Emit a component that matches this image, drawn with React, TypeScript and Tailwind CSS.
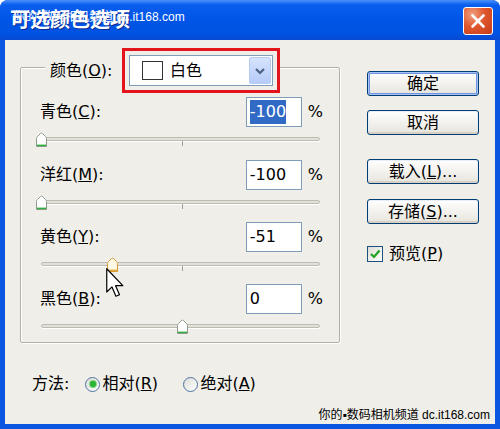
import React from 'react';

const font = { fontFamily: '"DejaVu Sans", "Noto Sans CJK SC", sans-serif' };
const markFont = { fontFamily: '"Liberation Sans", "Noto Sans CJK SC", sans-serif' };

function Thumb({ hover }: { hover?: boolean }) {
  return (
    <svg width="13" height="16" viewBox="0 0 13 16">
      <path
        d="M1.5 6.5 Q1.5 5.5 2.5 4.5 L5.5 1.5 Q6.5 0.8 7.5 1.5 L10.5 4.5 Q11.5 5.5 11.5 6.5 L11.5 14.5 L1.5 14.5 Z"
        fill={hover ? '#fff8e4' : '#ffffff'}
        stroke={hover ? '#d39a35' : '#8c9a8c'}
      />
      <path d="M2 12.6 L11 12.6 L11 14 L2 14 Z" fill={hover ? '#e8a93c' : '#2faf3c'} />
    </svg>
  );
}

function Slider({ thumb, hover, h }: { thumb: string; hover?: boolean; h: string }) {
  return (
    <div className={`relative ${h}`}>
      <div className="absolute left-[20px] top-[10px] h-[4px] w-[279px] rounded-full border border-[#bdbbb2] bg-[#e2e0d8] shadow-[0_1px_0_#ffffff]" />
      <div className="absolute left-[161px] top-[14px] h-[5px] w-px bg-[#a19f97]" />
      <div className={`absolute top-[5px] ${thumb}`}>
        <Thumb hover={hover} />
      </div>
    </div>
  );
}

function Row({ name, key1, value, selected }: { name: string; key1: string; value: string; selected?: boolean }) {
  return (
    <div className="flex h-[30px] items-center pl-[19px] pr-[16px]">
      <span>
        {name}(<span className="underline">{key1}</span>):
      </span>
      <div className="ml-auto flex h-[30px] w-[56px] items-center border border-[#7f9db9] bg-white pl-[3px]">
        {selected ? <span className="bg-[#316ac5] text-white">{value}</span> : <span>{value}</span>}
      </div>
      <span className="ml-[6px]">%</span>
    </div>
  );
}

function XPButton({ children, primary }: { children: React.ReactNode; primary?: boolean }) {
  return (
    <div
      className={`flex h-[25px] w-[112px] items-center justify-center rounded-[3px] border border-[#003c74] bg-gradient-to-b from-white to-[#e6e4dc] ${
        primary
          ? 'shadow-[inset_0_0_0_1px_#a8c4f4,inset_0_0_0_2px_#6d93e4]'
          : 'shadow-[inset_0_-2px_0_#d6d0c5,inset_0_0_0_1px_#e8eef9]'
      }`}
    >
      {children}
    </div>
  );
}

function Radio({ on }: { on?: boolean }) {
  return (
    <div className="flex h-[15px] w-[15px] items-center justify-center rounded-full border border-[#4f74a4] bg-gradient-to-br from-[#dcdcd6] to-white">
      {on && <div className="h-[6px] w-[6px] rounded-full bg-[#2bb336] shadow-[0_0_0_1px_#7fd27f]" />}
    </div>
  );
}

export default function App() {
  return (
    <div className="h-[429px] w-[500px] bg-white text-[16px] text-black" style={font}>
      <div className="relative flex h-full w-full flex-col rounded-t-[8px] bg-[#0b56e0]">
        {/* Title bar */}
        <div className="flex h-[40px] items-center justify-between rounded-t-[8px] bg-[linear-gradient(to_bottom,#4a92fa_0%,#0a5eef_12%,#0055e6_50%,#0053e2_85%,#0a48d0_100%)] pl-[10px] pr-[7px]">
          <span className="text-[20px] font-bold text-white [text-shadow:1px_1px_0_#0a2a90]">可选颜色选项</span>
          <div className="mt-[2px] flex h-[28px] w-[30px] items-center justify-center rounded-[3px] border border-white bg-[radial-gradient(circle_at_30%_25%,#f0a080_0%,#e0562c_45%,#c43c18_100%)]">
            <svg width="16" height="16" viewBox="0 0 16 16">
              <path d="M2.5 2.5 L13.5 13.5 M13.5 2.5 L2.5 13.5" stroke="#fff" strokeWidth="2.6" strokeLinecap="round" />
            </svg>
          </div>
        </div>

        {/* Body */}
        <div className="mx-[5px] mb-[5px] flex flex-1 bg-[#efeee8] pl-[15px] pt-[27px]">
          <div className="flex w-[320px] flex-col">
            <div className="flex h-[276px] flex-col rounded-[2px] border border-[#b4b1a4] shadow-[inset_1px_1px_0_#ffffff,1px_1px_0_#ffffff]">
              <div className="-mt-[20px] flex h-[45px] items-center">
                <span className="ml-[24px] w-[77px] bg-[#efeee8] pl-[5px]">
                  颜色(<span className="underline">O</span>):
                </span>
                <div className="h-[45px] w-[158px] border-[3px] border-[#e3141b] bg-[#efeee8] p-[4px]">
                  <div className="flex h-[31px] w-[144px] items-center border border-[#7f9db9] bg-white">
                    <div className="ml-[12px] h-[19px] w-[21px] border border-[#333333] bg-white" />
                    <span className="ml-[7px]">白色</span>
                    <div className="ml-auto mr-px flex h-[27px] w-[22px] items-center justify-center rounded-[2px] border border-[#b7cbf2] bg-gradient-to-b from-[#d6e3fd] to-[#b5cbf7]">
                      <svg width="12" height="10" viewBox="0 0 12 10">
                        <path d="M2 3 L6 7 L10 3" stroke="#4d6185" strokeWidth="2.2" fill="none" />
                      </svg>
                    </div>
                  </div>
                </div>
              </div>
              <div className="mt-[4px]">
                <Row name="青色" key1="C" value="-100" selected />
                <Slider thumb="left-[14px]" h="h-[33px]" />
                <Row name="洋红" key1="M" value="-100" />
                <Slider thumb="left-[14px]" h="h-[32px]" />
                <Row name="黄色" key1="Y" value="-51" />
                <Slider thumb="left-[85px]" hover h="h-[32px]" />
                <Row name="黑色" key1="B" value="0" />
                <Slider thumb="left-[155px]" h="h-[28px]" />
              </div>
            </div>

            <div className="ml-[12px] mt-[31px] flex h-[20px] items-center">
              <span>方法:</span>
              <div className="ml-[16px]">
                <Radio on />
              </div>
              <span className="ml-[2px] w-[63px]">
                相对(<span className="underline">R</span>)
              </span>
              <div className="ml-[18px]">
                <Radio />
              </div>
              <span className="ml-[2px]">
                绝对(<span className="underline">A</span>)
              </span>
            </div>
          </div>

          <div className="ml-[27px] flex flex-col pt-[4px]">
            <XPButton primary>确定</XPButton>
            <div className="mt-[14px]">
              <XPButton>取消</XPButton>
            </div>
            <div className="mt-[24px]">
              <XPButton>
                载入(<span className="underline">L</span>)...
              </XPButton>
            </div>
            <div className="mt-[15px]">
              <XPButton>
                存储(<span className="underline">S</span>)...
              </XPButton>
            </div>
            <div className="mt-[20px] flex h-[20px] items-center">
              <div className="flex h-[16px] w-[16px] items-center justify-center border border-[#1c5180] bg-gradient-to-br from-[#dcdcd6] to-white">
                <svg width="12" height="12" viewBox="0 0 12 12">
                  <path d="M2 6 L5 9 L10.5 2.5" stroke="#21a121" strokeWidth="2.2" fill="none" />
                </svg>
              </div>
              <span className="ml-[6px]">
                预览(<span className="underline">P</span>)
              </span>
            </div>
          </div>
        </div>

        {/* watermarks */}
        <span className="absolute left-[13px] top-[8px] text-[12px] text-white" style={markFont}>
          你的▪数码相机频道 dc.it168.com
        </span>
        <span className="absolute bottom-[5px] right-[10px] text-[12px] text-black" style={markFont}>
          你的▪数码相机频道 dc.it168.com
        </span>

        {/* mouse pointer */}
        <svg className="absolute left-[106px] top-[268px]" width="18" height="30" viewBox="0 0 12 20">
          <path d="M0.5 0.5 L0.5 16 L4 12.6 L6.6 18.8 L9 17.8 L6.4 11.8 L11.2 11.8 Z" fill="#fff" stroke="#000" strokeWidth="0.8" strokeLinejoin="round" />
        </svg>
      </div>
    </div>
  );
}
